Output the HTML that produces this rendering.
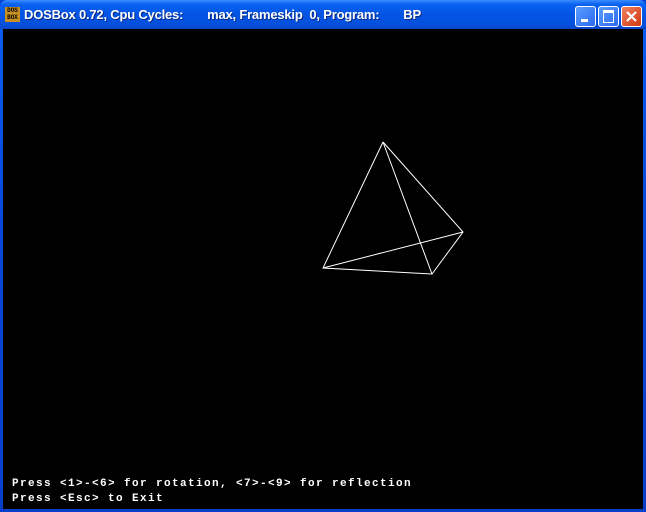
<!DOCTYPE html><html><head><style>
body{margin:0;width:646px;height:512px;overflow:hidden;background:#0842d0}
.win{position:absolute;left:0;top:0;width:646px;height:512px;background:linear-gradient(#0a5ef0,#0846d8 50%,#0840cc);border-radius:7px 7px 0 0}
.tb{position:absolute;left:0;top:0;width:646px;height:29px;background:linear-gradient(#3a8cff 0%,#0a62f0 15%,#0454e4 50%,#0450dc 85%,#0a44c8 100%);border-radius:7px 7px 0 0}
.title{position:absolute;left:24px;top:7px;color:#fff;font:bold 13px "Liberation Sans",sans-serif;white-space:pre;text-shadow:1px 1px #0a2a80;letter-spacing:-0.2px}
.ico{position:absolute;left:5px;top:7px;width:15px;height:15px;background:#c89020;color:#000;font:bold 6px "Liberation Mono",monospace;line-height:7px;text-align:center}
.b{position:absolute;top:6px;width:19px;height:19px;border:1px solid #fff;border-radius:3px;background:linear-gradient(135deg,#5a9cff,#2a6af0)}
.scr{position:absolute;left:3px;top:29px;width:640px;height:480px;background:#000}
.t{position:absolute;left:12px;color:#fff;font:bold 11px "Liberation Mono",monospace;letter-spacing:1.4px;white-space:pre}
</style></head><body><div class="win"></div>
<div class="tb"></div>
<div class="ico">DOS<br>BOX</div>
<div class="title">DOSBox 0.72, Cpu Cycles:       max, Frameskip  0, Program:       BP</div>
<div class="b" style="left:575px"><div style="position:absolute;left:5px;top:12px;width:7px;height:3px;background:#fff"></div></div>
<div class="b" style="left:598px"><div style="position:absolute;left:4px;top:3px;width:9px;height:9px;border:1px solid #fff;border-top-width:3px"></div></div>
<div class="b" style="left:621px;background:linear-gradient(135deg,#f08060,#d03810)"><svg width="19" height="19" style="position:absolute;left:0;top:0"><path d="M5 5L14 14M14 5L5 14" stroke="#fff" stroke-width="2.2"/></svg></div>
<div class="scr"></div>
<svg width="646" height="512" style="position:absolute;left:0;top:0"><g stroke="#fff" stroke-width="1" fill="none">
<path d="M383 142L323 268L432 274L463 232L383 142L432 274M323 268L463 232"/></g></svg>
<div class="t" style="top:478px">Press &lt;1&gt;-&lt;6&gt; for rotation, &lt;7&gt;-&lt;9&gt; for reflection</div>
<div class="t" style="top:493px">Press &lt;Esc&gt; to Exit</div>
</body></html>
